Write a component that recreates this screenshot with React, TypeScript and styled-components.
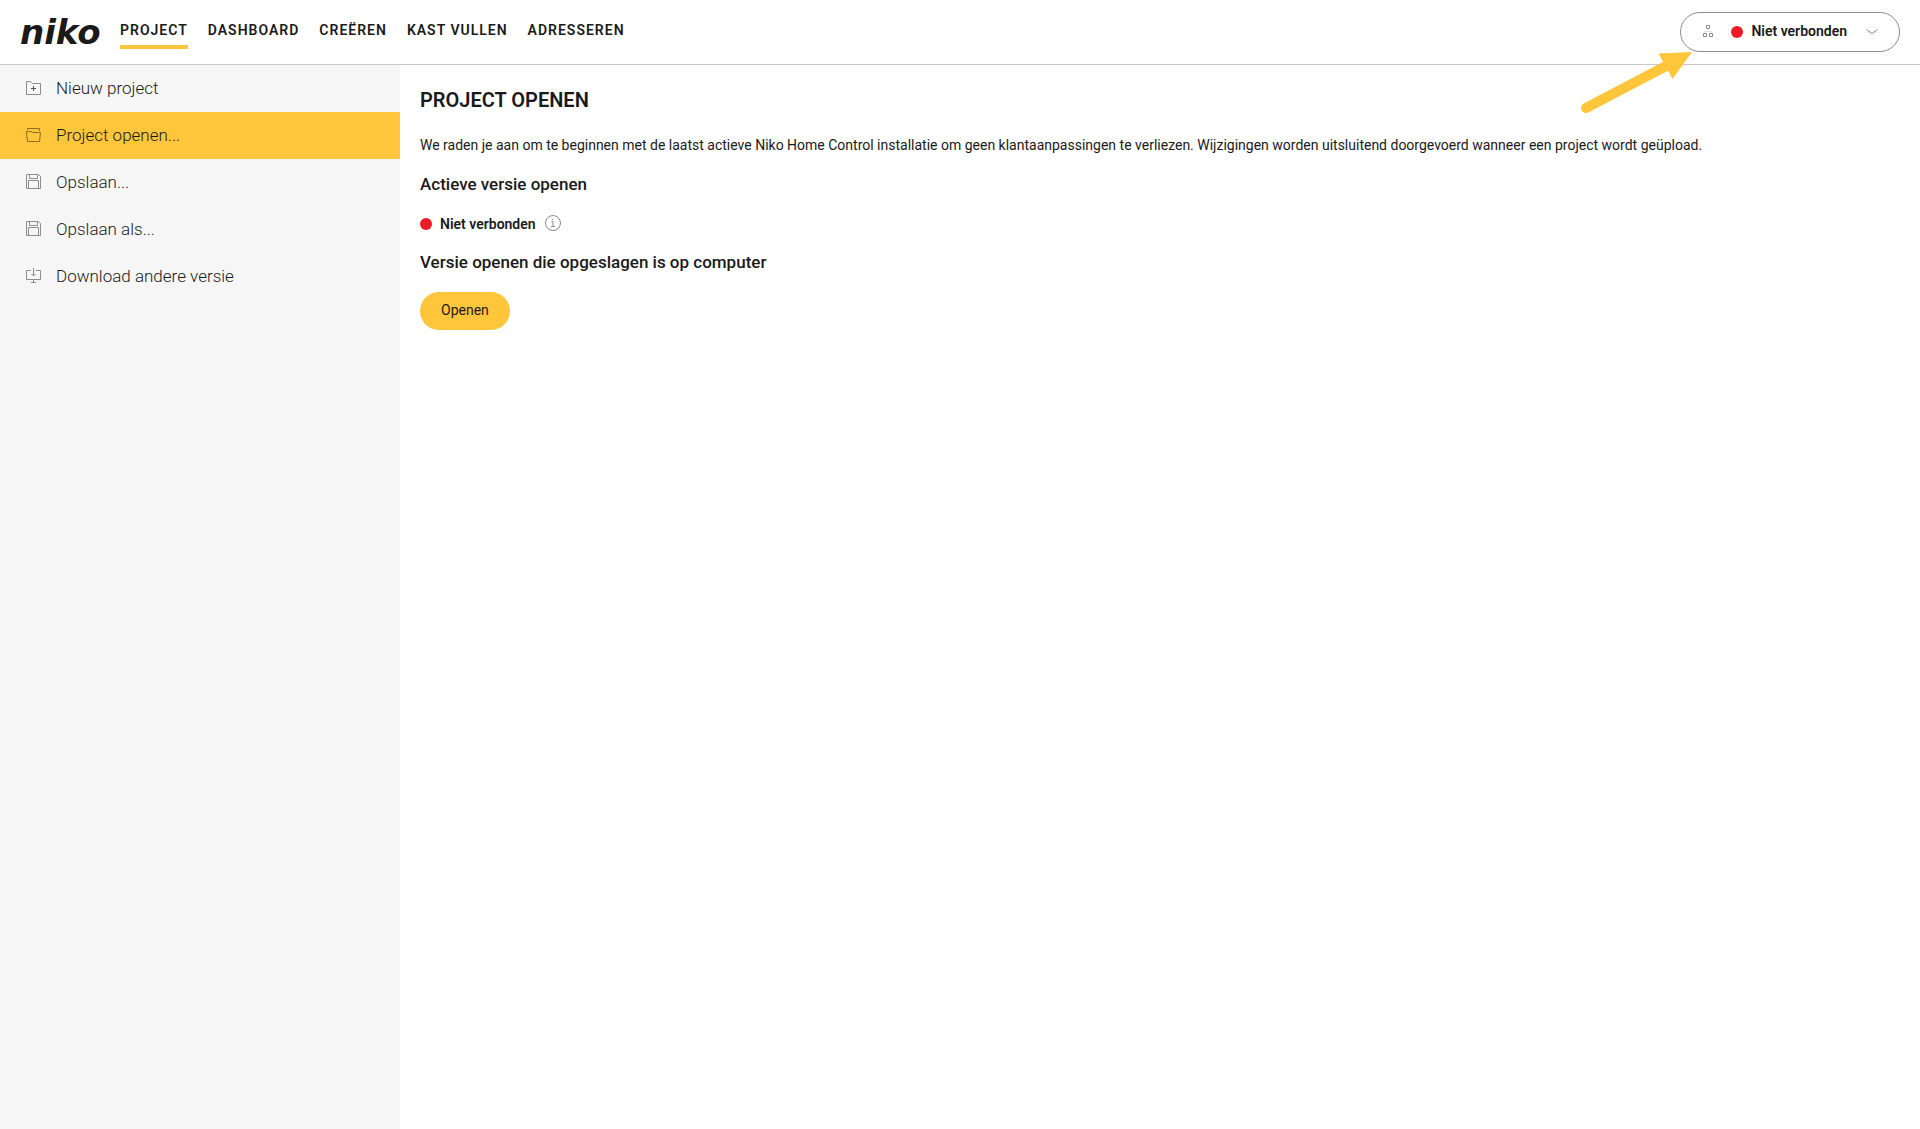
import React from "react";
import styled, { createGlobalStyle } from "styled-components";

const color = {
  ink: "#1a1a1a",
  accent: "#ffc63b",
  red: "#ed1c24",
  panel: "#f6f6f6",
  line: "#c8c8c8",
  icon: "#8c8c8c",
};

const GlobalStyle = createGlobalStyle`
  * { box-sizing: border-box; }
  body {
    margin: 0;
    background: #fff;
    color: ${color.ink};
    font-family: Roboto, "Liberation Sans", sans-serif;
    font-size: 14px;
    line-height: 20px;
  }
  button { font: inherit; color: inherit; cursor: pointer; }
  h1, h2, p, ul { margin: 0; padding: 0; }
  ul { list-style: none; }
`;

const Page = styled.div`
  display: flex;
  flex-direction: column;
  min-height: 100vh;
`;

const Header = styled.header`
  position: relative;
  display: flex;
  align-items: center;
  height: 65px;
  padding: 0 20px;
  border-bottom: 1px solid ${color.line};
`;

const Logo = styled.a`
  width: 100px;
  font-family: "DejaVu Sans", sans-serif;
  font-size: 34px;
  font-weight: 700;
  font-style: italic;
  line-height: 44px;
  color: ${color.ink};
  text-decoration: none;
`;

const Nav = styled.nav`
  display: flex;
  flex: 1;
  gap: 20px;
`;

const NavLink = styled.a<{ $active?: boolean }>`
  padding: 4px 0 5px;
  border-bottom: 4px solid ${(p) => (p.$active ? color.accent : "transparent")};
  color: ${color.ink};
  font-weight: 600;
  letter-spacing: 1px;
  text-decoration: none;
`;

const Connection = styled.button`
  display: flex;
  align-items: center;
  height: 40px;
  padding: 0 20px;
  border: 1px solid ${color.icon};
  border-radius: 20px;
  background: #fff;
  font-weight: 600;
`;

const Dot = styled.span`
  width: 12px;
  height: 12px;
  border-radius: 50%;
  background: ${color.red};
`;

const ConnectionLabel = styled.span`
  margin: 0 18px 0 8px;
  padding-bottom: 2px;
`;

const Icon = styled.svg`
  flex: none;
  fill: none;
  stroke: ${color.icon};
  stroke-width: 1;
`;

const NetworkIcon = styled(Icon)`
  margin-right: 16px;
`;

const Pointer = styled.svg`
  position: absolute;
  top: 50px;
  right: 228px;
  pointer-events: none;
`;

const Body = styled.div`
  display: flex;
  flex: 1;
`;

const Sidebar = styled.aside`
  flex: none;
  width: 400px;
  background: ${color.panel};
`;

const SideButton = styled.button<{ $active?: boolean }>`
  display: flex;
  align-items: center;
  gap: 14px;
  width: 100%;
  height: 47px;
  padding: 0 25px 2px;
  border: 0;
  background: ${(p) => (p.$active ? color.accent : "transparent")};
  font-size: 17px;
  font-weight: 300;
  text-align: left;

  ${Icon} {
    stroke: ${(p) => (p.$active ? "#8a6d28" : color.icon)};
  }
`;

const Main = styled.main`
  flex: 1;
  padding: 23px 20px;
`;

const Title = styled.h1`
  font-size: 20px;
  line-height: 24px;
  font-weight: 600;
`;

const Intro = styled.p`
  margin-top: 23px;
`;

const Subtitle = styled.h2`
  margin-top: 17px;
  font-size: 17px;
  line-height: 24px;
  font-weight: 500;
`;

const Status = styled.div`
  display: flex;
  align-items: center;
  gap: 8px;
  height: 18px;
  margin-top: 19px;
  font-weight: 600;
`;

const InfoButton = styled.button`
  display: flex;
  padding: 0;
  border: 0;
  background: none;
`;

const OpenButton = styled.button`
  height: 38px;
  margin-top: 18px;
  padding: 0 21px 2px;
  border: 0;
  border-radius: 19px;
  background: ${color.accent};
`;

const NewIcon = () => (
  <Icon width="17" height="17" viewBox="0 0 17 17" aria-hidden="true">
    <path d="M1.500 15.500V2.500H5.500L7.500 4.500H15.500V15.500Z" />
    <path d="M8.500 7V12M6 9.500H11" stroke="#555" />
  </Icon>
);

const FolderIcon = () => (
  <Icon width="17" height="17" viewBox="0 0 17 17" aria-hidden="true">
    <path d="M2.500 4V2.500H14.500V5M2.500 15.500L1.500 5.500H6L7.500 6.500H15.500L14.500 15.500H2.500Z" />
  </Icon>
);

const SaveIcon = () => (
  <Icon width="17" height="17" viewBox="0 0 17 17" aria-hidden="true">
    <path d="M1.500 1.500H13.500L15.500 3.500V15.500H1.500ZM4.500 1.500V5.500H12.500V1.500M3.500 15.500V7.500H13.500V15.500" />
  </Icon>
);

const DownloadIcon = () => (
  <Icon width="17" height="17" viewBox="0 0 17 17" aria-hidden="true">
    <path d="M6 3.500H1.500V12.500H15.500V3.500H11M8.500 1V8.500M6.500 7L8.500 9L10.500 7M8.500 12.500V15M6 15.500H11" />
  </Icon>
);

const navItems = ["PROJECT", "DASHBOARD", "CREËREN", "KAST VULLEN", "ADRESSEREN"];

const sideItems = [
  { label: "Nieuw project", Glyph: NewIcon },
  { label: "Project openen...", Glyph: FolderIcon, active: true },
  { label: "Opslaan...", Glyph: SaveIcon },
  { label: "Opslaan als...", Glyph: SaveIcon },
  { label: "Download andere versie", Glyph: DownloadIcon },
];

export default function App() {
  return (
    <Page>
      <GlobalStyle />
      <Header>
        <Logo href="#">niko</Logo>
        <Nav>
          {navItems.map((item, i) => (
            <NavLink key={item} href="#" $active={i === 0}>
              {item}
            </NavLink>
          ))}
        </Nav>
        <Connection type="button">
          <NetworkIcon width="14" height="14" viewBox="0 0 14 14" aria-hidden="true">
            <path d="M5.500 .5H8.500V3.500H5.500ZM2.500 8.500H5.500V11.500H2.500ZM8.500 8.500H11.500V11.500H8.500Z" />
            <path d="M7 4V6M3.500 8V6.500H10.500V8" strokeOpacity=".25" />
          </NetworkIcon>
          <Dot />
          <ConnectionLabel>Niet verbonden</ConnectionLabel>
          <Icon width="14" height="14" viewBox="0 0 14 14" aria-hidden="true">
            <path d="M1.500 4.500L7 8.500L12.500 4.500" />
          </Icon>
        </Connection>
        <Pointer width="114" height="66" viewBox="0 0 114 66" aria-hidden="true">
          <path d="M8 58L90 15" stroke={color.accent} strokeWidth="10" strokeLinecap="round" />
          <path d="M80.500 3.500L114 2L94.500 29Z" fill={color.accent} />
        </Pointer>
      </Header>
      <Body>
        <Sidebar>
          <ul>
            {sideItems.map(({ label, Glyph, active }) => (
              <li key={label}>
                <SideButton type="button" $active={active}>
                  <Glyph />
                  {label}
                </SideButton>
              </li>
            ))}
          </ul>
        </Sidebar>
        <Main>
          <Title>PROJECT OPENEN</Title>
          <Intro>
            We raden je aan om te beginnen met de laatst actieve Niko Home Control installatie om geen
            klantaanpassingen te verliezen. Wijzigingen worden uitsluitend doorgevoerd wanneer een project wordt
            geüpload.
          </Intro>
          <Subtitle>Actieve versie openen</Subtitle>
          <Status>
            <Dot />
            <span>Niet verbonden</span>
            <InfoButton type="button" aria-label="Info">
              <Icon width="18" height="18" viewBox="0 0 18 18" aria-hidden="true">
                <circle cx="9" cy="8" r="7.500" />
                <path d="M7.500 6.500H9V11.500M7 11.500H11M8 4.500H9" />
              </Icon>
            </InfoButton>
          </Status>
          <Subtitle>Versie openen die opgeslagen is op computer</Subtitle>
          <OpenButton type="button">Openen</OpenButton>
        </Main>
      </Body>
    </Page>
  );
}
